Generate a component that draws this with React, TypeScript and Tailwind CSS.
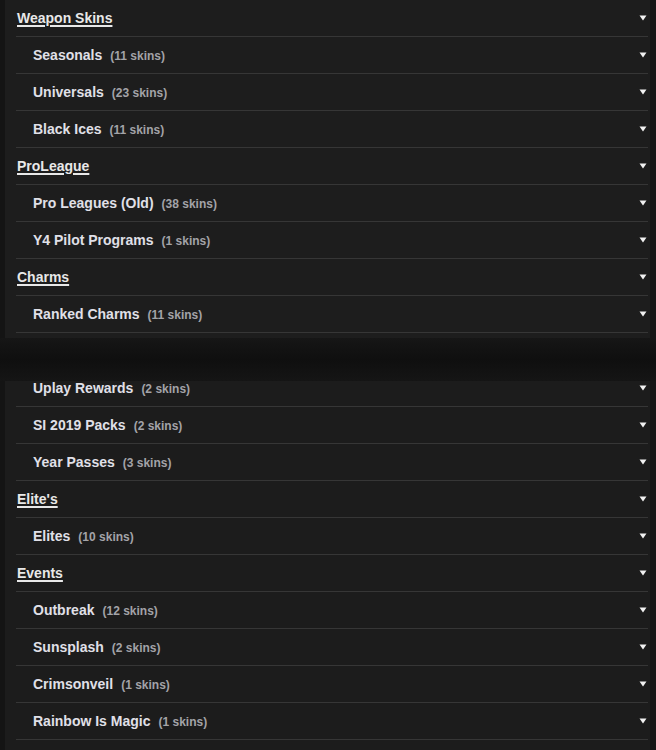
import React from "react";

type Row = { kind: "h" | "s"; name: string; count?: string };

const top: Row[] = [
  { kind: "h", name: "Weapon Skins" },
  { kind: "s", name: "Seasonals", count: "(11 skins)" },
  { kind: "s", name: "Universals", count: "(23 skins)" },
  { kind: "s", name: "Black Ices", count: "(11 skins)" },
  { kind: "h", name: "ProLeague" },
  { kind: "s", name: "Pro Leagues (Old)", count: "(38 skins)" },
  { kind: "s", name: "Y4 Pilot Programs", count: "(1 skins)" },
  { kind: "h", name: "Charms" },
  { kind: "s", name: "Ranked Charms", count: "(11 skins)" },
];

const bottom: Row[] = [
  { kind: "s", name: "Uplay Rewards", count: "(2 skins)" },
  { kind: "s", name: "SI 2019 Packs", count: "(2 skins)" },
  { kind: "s", name: "Year Passes", count: "(3 skins)" },
  { kind: "h", name: "Elite's" },
  { kind: "s", name: "Elites", count: "(10 skins)" },
  { kind: "h", name: "Events" },
  { kind: "s", name: "Outbreak", count: "(12 skins)" },
  { kind: "s", name: "Sunsplash", count: "(2 skins)" },
  { kind: "s", name: "Crimsonveil", count: "(1 skins)" },
  { kind: "s", name: "Rainbow Is Magic", count: "(1 skins)" },
];

function Tri() {
  return (
    <svg width="8" height="6" viewBox="0 0 8 6" className="shrink-0">
      <polygon points="0.5,0.5 7.5,0.5 4,5.5" fill="#f2f2f2" />
    </svg>
  );
}

function RowView({ r }: { r: Row }) {
  return (
    <div className="flex items-center justify-between h-[37px] border-b border-[#363636] pr-[1px]">
      {r.kind === "h" ? (
        <span className="pl-[1px] text-[14px] font-bold text-[#e8e8e8] underline underline-offset-[2px] decoration-[1.5px]">
          {r.name}
        </span>
      ) : (
        <span className="pl-[17px] flex items-baseline gap-[8px]">
          <span className="text-[14px] font-bold text-[#e0e0e8]">{r.name}</span>
          <span className="text-[12px] font-bold text-[#a3a3a8]">{r.count}</span>
        </span>
      )}
      <Tri />
    </div>
  );
}

export default function App() {
  return (
    <div
      className="w-[656px] h-[750px] overflow-hidden bg-[#161616] flex flex-col"
      style={{ fontFamily: '"Liberation Sans", Arial, sans-serif' }}
    >
      <div className="flex">
        <div className="w-[5px] bg-[#141414]" />
        <div className="flex-1 bg-[#1d1d1d] pl-[11px] pr-[2px] pb-[5px]">
          {top.map((r, i) => (
            <RowView key={i} r={r} />
          ))}
        </div>
        <div className="w-[6px] bg-[#161616]" />
      </div>
      <div className="h-[43px] bg-gradient-to-b from-[#161616] via-[#0f0f0f] to-[#151515]" />
      <div className="flex flex-1 overflow-hidden">
        <div className="w-[5px] bg-[#141414]" />
        <div className="flex-1 bg-[#1c1c1c] pl-[11px] pr-[2px] overflow-hidden">
          <div className="-mt-[11px]">
            {bottom.map((r, i) => (
              <RowView key={i} r={r} />
            ))}
          </div>
        </div>
        <div className="w-[6px] bg-[#161616]" />
      </div>
    </div>
  );
}
